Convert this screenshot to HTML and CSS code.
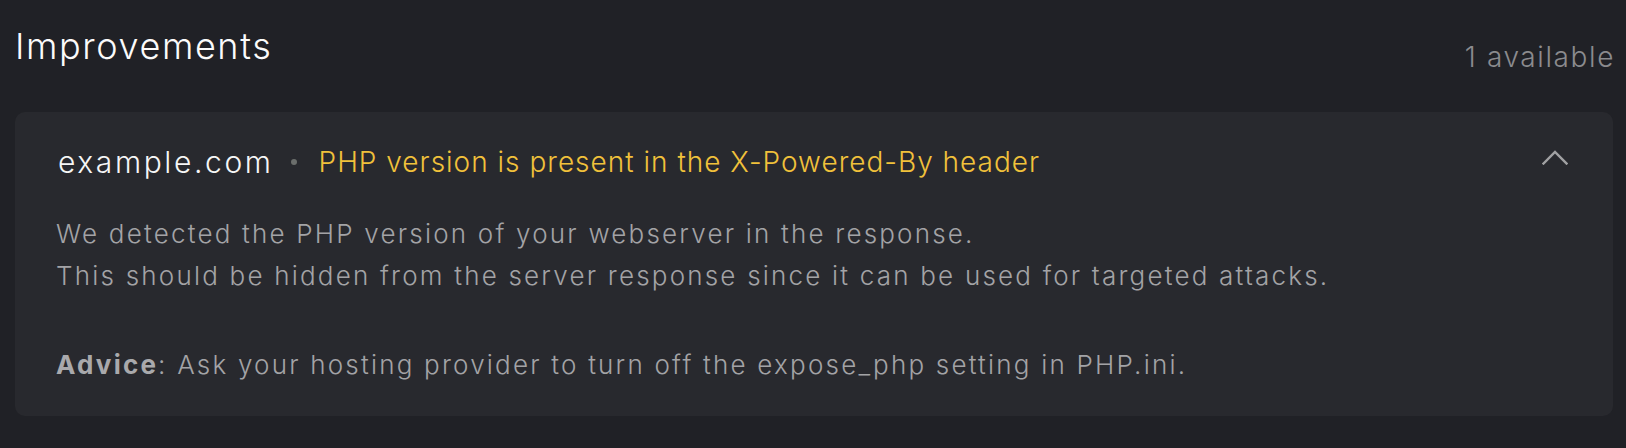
FILE: index.html
```html
<!DOCTYPE html>
<html lang="en">
<head>
<meta charset="utf-8">
<title>Improvements</title>
<link rel="stylesheet" href="styles.css">
</head>
<body>
<main class="page">
  <header class="section-head">
    <h1 class="section-title">Improvements</h1>
    <span class="section-count">1 available</span>
  </header>
  <section class="card">
    <div class="card-head">
      <span class="domain">example.com</span>
      <span class="dot"></span>
      <span class="issue">PHP version is present in the X-Powered-By header</span>
      <svg class="chevron" width="26" height="16" viewBox="0 0 26 16" aria-hidden="true">
        <path d="M1.5 14.5 L13 3 L24.5 14.5" fill="none" stroke="#a1a1a3" stroke-width="2.4" stroke-linecap="square"/>
      </svg>
    </div>
    <div class="card-body">
      <p class="desc">We detected the PHP version of your webserver in the response.<br>This should be hidden from the server response since it can be used for targeted attacks.</p>
      <p class="advice"><strong>Advice</strong>: Ask your hosting provider to turn off the expose_php setting in PHP.ini.</p>
    </div>
  </section>
</main>
</body>
</html>
```
FILE: styles.css
```css
html, body {
  margin: 0;
  padding: 0;
  background: #202126;
}
body {
  font-family: "Inter", "Liberation Sans", sans-serif;
  color: #fff;
  width: 1626px;
  height: 448px;
  overflow: hidden;
}
.page {
  padding: 24px 13px 0 15px;
}
.section-head {
  display: flex;
  justify-content: space-between;
  align-items: flex-start;
  height: 44px;
}
.section-title {
  margin: 0;
  font-size: 36px;
  line-height: 44px;
  font-weight: 300;
  color: #fbfbfb;
  letter-spacing: 1.6px;
}
.section-count {
  margin-top: 15px;
  margin-right: -2px;
  font-size: 28px;
  line-height: 36px;
  font-weight: 300;
  color: #8b8b8e;
  letter-spacing: 1.6px;
}
.card {
  margin-top: 44px;
  background: #28292e;
  border-radius: 10px;
  padding: 32px 45px 30px 41px;
}
.card-head {
  display: flex;
  align-items: center;
  height: 36px;
  font-size: 28px;
  line-height: 36px;
  font-weight: 300;
}
.domain {
  color: #f6f6f6;
  padding-left: 2px;
  font-size: 30px;
  letter-spacing: 2.6px;
}
.dot {
  width: 6px;
  height: 6px;
  border-radius: 50%;
  background: #6b6e6c;
  margin: 0 22px 0 17px;
}
.issue {
  color: #f1c13b;
  letter-spacing: 1px;
}
.chevron {
  margin-left: auto;
  align-self: flex-start;
  margin-top: 5px;
}
.card-body {
  margin-top: 33px;
  font-size: 26px;
  line-height: 42px;
  font-weight: 300;
  color: #a3a3a6;
  letter-spacing: 2.2px;
}
.desc {
  margin: 0;
}
.advice {
  margin: 47px 0 0;
}
.advice strong {
  font-weight: 700;
  color: #a9a9ac;
}
```
